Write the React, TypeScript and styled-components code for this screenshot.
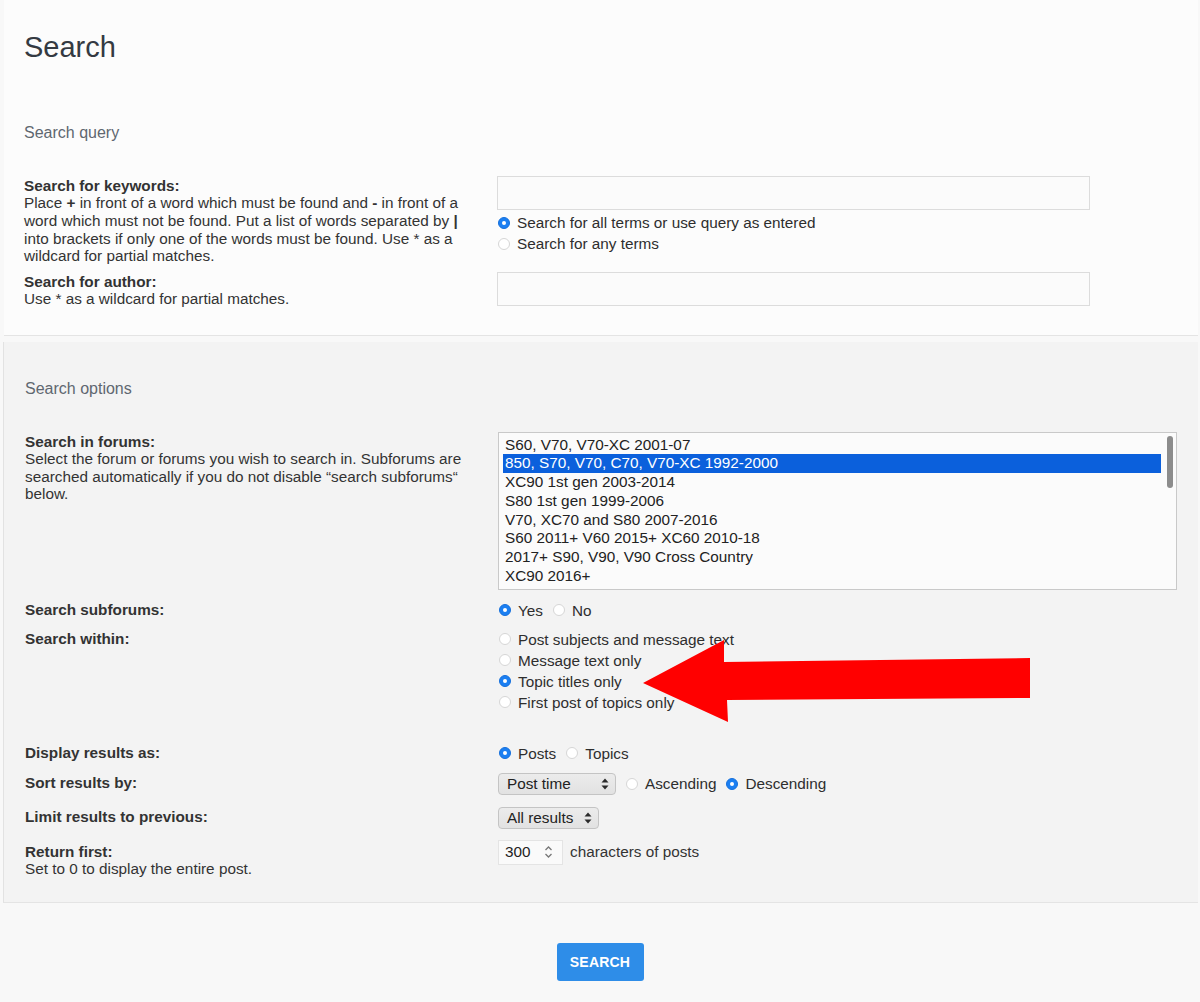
import React, { FC } from "react";
import styled, { createGlobalStyle } from "styled-components";

const GlobalStyle = createGlobalStyle`
  html, body {
    margin: 0;
    padding: 0;
    background: #f7f7f7;
  }
  body {
    font-family: "Liberation Sans", Arial, sans-serif;
    font-size: 15.3px;
    color: #333;
  }
  * {
    box-sizing: border-box;
  }
`;

const forums = [
  "S60, V70, V70-XC 2001-07",
  "850, S70, V70, C70, V70-XC 1992-2000",
  "XC90 1st gen 2003-2014",
  "S80 1st gen 1999-2006",
  "V70, XC70 and S80 2007-2016",
  "S60 2011+ V60 2015+ XC60 2010-18",
  "2017+ S90, V90, V90 Cross Country",
  "XC90 2016+",
];

const Radio: FC<{ checked?: boolean; label: string }> = ({ checked, label }) => (
  <RadioOption>
    <RadioDot $checked={!!checked} />
    <span>{label}</span>
  </RadioOption>
);

const UpDown: FC = () => (
  <svg width="8" height="12" viewBox="0 0 8 12">
    <path d="M4 0.5 L7.5 4.5 H0.5 Z" fill="#2a2a2a" />
    <path d="M4 11.5 L7.5 7.5 H0.5 Z" fill="#2a2a2a" />
  </svg>
);

const Spinner: FC = () => (
  <svg width="9" height="14" viewBox="0 0 9 14">
    <path d="M1.5 5 L4.5 2 L7.5 5" fill="none" stroke="#777" strokeWidth="1.3" />
    <path d="M1.5 9 L4.5 12 L7.5 9" fill="none" stroke="#777" strokeWidth="1.3" />
  </svg>
);

const App: FC = () => {
  return (
    <Page>
      <GlobalStyle />
      <Panel>
        <Title>Search</Title>
        <SectionHeading>Search query</SectionHeading>
        <Row>
          <Term>
            <Label>Search for keywords:</Label>
            <Explain>
              Place <b>+</b> in front of a word which must be found and <b>-</b> in front of a word
              which must not be found. Put a list of words separated by <b>|</b> into brackets if
              only one of the words must be found. Use * as a wildcard for partial matches.
            </Explain>
          </Term>
          <Def>
            <TextInput />
            <Stack $mt={2}>
              <Radio checked label="Search for all terms or use query as entered" />
              <Radio label="Search for any terms" />
            </Stack>
          </Def>
        </Row>
        <Row $mt={7}>
          <Term>
            <Label>Search for author:</Label>
            <Explain>Use * as a wildcard for partial matches.</Explain>
          </Term>
          <Def>
            <TextInput />
          </Def>
        </Row>
      </Panel>

      <Panel $grey>
        <SectionHeading>Search options</SectionHeading>
        <Row>
          <Term>
            <Label>Search in forums:</Label>
            <Explain>
              Select the forum or forums you wish to search in. Subforums are searched
              automatically if you do not disable “search subforums“ below.
            </Explain>
          </Term>
          <Def>
            <ListBox>
              {forums.map((f, i) => (
                <ListItem key={f} $selected={i === 1}>
                  {f}
                </ListItem>
              ))}
              <ScrollThumb />
            </ListBox>
          </Def>
        </Row>
        <Row $mt={10}>
          <Term>
            <Label>Search subforums:</Label>
          </Term>
          <Def>
            <Inline>
              <Radio checked label="Yes" />
              <Radio label="No" />
            </Inline>
          </Def>
        </Row>
        <Row $mt={8}>
          <Term>
            <Label>Search within:</Label>
          </Term>
          <Def>
            <Stack>
              <Radio label="Post subjects and message text" />
              <Radio label="Message text only" />
              <Radio checked label="Topic titles only" />
              <Radio label="First post of topics only" />
            </Stack>
          </Def>
        </Row>
        <Row $mt={30}>
          <Term>
            <Label>Display results as:</Label>
          </Term>
          <Def>
            <Inline>
              <Radio checked label="Posts" />
              <Radio label="Topics" />
            </Inline>
          </Def>
        </Row>
        <Row $mt={9}>
          <Term>
            <Label>Sort results by:</Label>
          </Term>
          <Def>
            <Inline>
              <SelectBox $w={118}>
                <span>Post time</span>
                <UpDown />
              </SelectBox>
              <Radio label="Ascending" />
              <Radio checked label="Descending" />
            </Inline>
          </Def>
        </Row>
        <Row $mt={12}>
          <Term>
            <Label>Limit results to previous:</Label>
          </Term>
          <Def>
            <SelectBox $w={101}>
              <span>All results</span>
              <UpDown />
            </SelectBox>
          </Def>
        </Row>
        <Row $mt={11}>
          <Term $pt={2}>
            <Label>Return first:</Label>
            <Explain>Set to 0 to display the entire post.</Explain>
          </Term>
          <Def>
            <Inline $gap={7}>
              <NumberBox>
                <span>300</span>
                <Spinner />
              </NumberBox>
              <span>characters of posts</span>
            </Inline>
          </Def>
        </Row>
      </Panel>

      <Footer>
        <SearchButton>SEARCH</SearchButton>
      </Footer>

      <Arrow viewBox="0 0 395 90" width="395" height="90">
        <polygon points="3,47 84,4 84,26 390,22 390,62 87,64 88,86" fill="#ff0000" />
      </Arrow>
    </Page>
  );
};

const Page = styled.div`
  position: relative;
  width: 1200px;
  min-height: 1002px;
  background: #f8f8f8;
`;

const Panel = styled.section<{ $grey?: boolean }>`
  margin: ${(p) => (p.$grey ? "6px 2px 0 3px" : "0 2px 0 4px")};
  padding: ${(p) => (p.$grey ? "37px 20px 24px 21px" : "30px 20px 27px 20px")};
  background: ${(p) => (p.$grey ? "#f3f3f3" : "#fcfcfc")};
  border-bottom: 1px solid #e4e4e4;
  border-left: ${(p) => (p.$grey ? "1px solid #e2e2e2" : "none")};
`;

const Title = styled.h1`
  margin: 0;
  font-size: 29px;
  line-height: 34px;
  font-weight: 400;
  color: #343a42;
`;

const SectionHeading = styled.h3`
  margin: 0 0 33px;
  font-size: 16px;
  line-height: 20px;
  font-weight: 400;
  color: #5f6770;

  ${Title} + & {
    margin-top: 59px;
  }
`;

const Row = styled.div<{ $mt?: number }>`
  display: grid;
  grid-template-columns: 473px 1fr;
  align-items: start;
  margin-top: ${(p) => p.$mt ?? 0}px;
`;

const Term = styled.div<{ $pt?: number }>`
  padding-right: 20px;
  padding-top: ${(p) => p.$pt ?? 0}px;
  line-height: 17.75px;
`;

const Label = styled.div`
  font-weight: 700;
  line-height: 18px;
  margin-top: 1px;
  margin-bottom: -1px;
`;

const Explain = styled.div`
  line-height: 17.75px;

  b {
    font-weight: 700;
  }
`;

const Def = styled.div`
  display: flex;
  flex-direction: column;
  align-items: flex-start;
`;

const TextInput = styled.div`
  width: 593px;
  height: 34px;
  border: 1px solid #dcdcdc;
  background: #fbfbfb;
`;

const Stack = styled.div<{ $mt?: number }>`
  display: flex;
  flex-direction: column;
  margin-top: ${(p) => p.$mt ?? 0}px;
`;

const Inline = styled.div<{ $gap?: number }>`
  display: flex;
  align-items: center;
  gap: ${(p) => p.$gap ?? 9}px;
`;

const RadioOption = styled.label`
  display: flex;
  align-items: center;
  gap: 7px;
  height: 21px;
  line-height: 21px;
  color: #2e2e2e;
`;

const RadioDot = styled.span<{ $checked: boolean }>`
  position: relative;
  width: 12px;
  height: 12px;
  margin-left: 1px;
  border-radius: 50%;
  flex-shrink: 0;
  background: ${(p) => (p.$checked ? "#1b7ff2" : "#fff")};
  border: 1px solid ${(p) => (p.$checked ? "#1570dc" : "#d6d6d6")};

  &::after {
    content: "";
    display: ${(p) => (p.$checked ? "block" : "none")};
    position: absolute;
    left: 3px;
    top: 3px;
    width: 4px;
    height: 4px;
    border-radius: 50%;
    background: #fff;
  }
`;

const ListBox = styled.div`
  position: relative;
  width: 679px;
  height: 158px;
  padding: 3px 15px 0 4px;
  border: 1px solid #c9c9c9;
  background: #fbfbfb;
  overflow: hidden;
`;

const ListItem = styled.div<{ $selected: boolean }>`
  height: 18.7px;
  line-height: 18.7px;
  padding-left: 2px;
  white-space: nowrap;
  background: ${(p) => (p.$selected ? "#0b60dc" : "transparent")};
  color: ${(p) => (p.$selected ? "#fff" : "#222")};
`;

const ScrollThumb = styled.span`
  position: absolute;
  right: 3px;
  top: 3px;
  width: 6px;
  height: 52px;
  border-radius: 3px;
  background: #8c8c8c;
`;

const SelectBox = styled.div<{ $w: number }>`
  display: flex;
  align-items: center;
  justify-content: space-between;
  width: ${(p) => p.$w}px;
  height: 22px;
  padding: 0 6px 0 8px;
  border: 1px solid #c4c4c4;
  border-radius: 4px;
  background: linear-gradient(#ececec, #e2e2e2);
  color: #222;
`;

const NumberBox = styled.div`
  display: flex;
  align-items: center;
  justify-content: space-between;
  width: 65px;
  height: 25px;
  padding: 0 9px 0 6px;
  border: 1px solid #e4e4e4;
  background: #fafafa;
  color: #222;
`;

const Footer = styled.footer`
  display: flex;
  justify-content: center;
  padding: 40px 0 21px;
`;

const SearchButton = styled.button`
  width: 87px;
  height: 38px;
  border: none;
  border-radius: 3px;
  background: #2e8de8;
  color: #fff;
  font-family: "Liberation Sans", Arial, sans-serif;
  font-size: 14px;
  font-weight: 700;
  letter-spacing: 0.2px;
  cursor: pointer;
`;

const Arrow = styled.svg`
  position: absolute;
  left: 640px;
  top: 636px;
`;

export default App;
